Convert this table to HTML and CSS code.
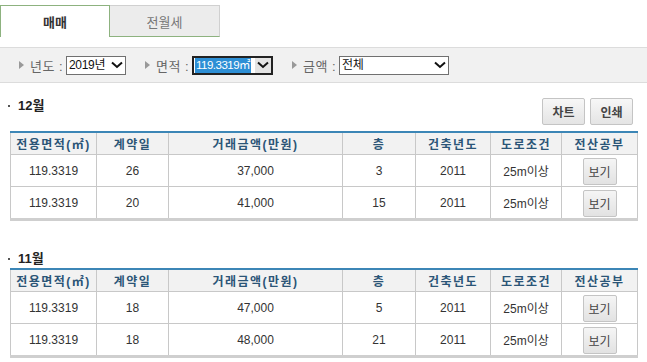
FILE: index.html
```html
<!DOCTYPE html>
<html lang="ko">
<head>
<meta charset="utf-8">
<link rel="stylesheet" href="styles.css">
</head>
<body>
<div class="tabs">
  <div class="tab active">매매</div>
  <div class="tab">전월세</div>
</div>

<div class="filter">
  <div class="fitem">
    <span class="tri"></span><span class="flabel">년도 :</span>
    <div class="sel sel-year"><span class="sval">2019년</span><span class="arrow"><svg width="12" height="8" viewBox="0 0 12 8"><path d="M1 1.5 L6 6 L11 1.5" fill="none" stroke="#111" stroke-width="2"/></svg></span></div>
  </div>
  <div class="fitem">
    <span class="tri"></span><span class="flabel">면적 :</span>
    <div class="sel sel-area focus"><span class="sval hl">119.3319㎡</span><span class="arrow gray"><svg width="12" height="8" viewBox="0 0 12 8"><path d="M1 1.5 L6 6 L11 1.5" fill="none" stroke="#111" stroke-width="2"/></svg></span></div>
  </div>
  <div class="fitem">
    <span class="tri"></span><span class="flabel">금액 :</span>
    <div class="sel sel-price"><span class="sval">전체</span><span class="arrow"><svg width="12" height="8" viewBox="0 0 12 8"><path d="M1 1.5 L6 6 L11 1.5" fill="none" stroke="#111" stroke-width="2"/></svg></span></div>
  </div>
</div>

<div class="section first">
  <div class="shead">
    <h3 class="stitle">12월</h3>
    <div class="btns">
      <span class="btn">차트</span>
      <span class="btn">인쇄</span>
    </div>
  </div>
  <table class="grid">
    <colgroup><col class="c1"><col class="c2"><col class="c3"><col class="c4"><col class="c5"><col class="c6"><col class="c7"></colgroup>
    <thead>
      <tr><th>전용면적(㎡)</th><th>계약일</th><th>거래금액(만원)</th><th>층</th><th>건축년도</th><th>도로조건</th><th>전산공부</th></tr>
    </thead>
    <tbody>
      <tr><td>119.3319</td><td>26</td><td>37,000</td><td>3</td><td>2011</td><td>25m이상</td><td><span class="view">보기</span></td></tr>
      <tr><td>119.3319</td><td>20</td><td>41,000</td><td>15</td><td>2011</td><td>25m이상</td><td><span class="view">보기</span></td></tr>
    </tbody>
  </table>
</div>

<div class="section second">
  <div class="shead">
    <h3 class="stitle">11월</h3>
  </div>
  <table class="grid">
    <colgroup><col class="c1"><col class="c2"><col class="c3"><col class="c4"><col class="c5"><col class="c6"><col class="c7"></colgroup>
    <thead>
      <tr><th>전용면적(㎡)</th><th>계약일</th><th>거래금액(만원)</th><th>층</th><th>건축년도</th><th>도로조건</th><th>전산공부</th></tr>
    </thead>
    <tbody>
      <tr><td>119.3319</td><td>18</td><td>47,000</td><td>5</td><td>2011</td><td>25m이상</td><td><span class="view">보기</span></td></tr>
      <tr><td>119.3319</td><td>18</td><td>48,000</td><td>21</td><td>2011</td><td>25m이상</td><td><span class="view">보기</span></td></tr>
    </tbody>
  </table>
</div>
</body>
</html>
```

FILE: styles.css
```css
html, body {
  margin: 0;
  padding: 0;
  background: #fff;
  overflow: hidden;
}
body {
  font-family: "Liberation Sans", "Noto Sans CJK KR", sans-serif;
  font-size: 12px;
  color: #333;
  width: 647px;
  height: 362px;
}

.tabs {
  display: flex;
  padding-top: 5px;
}
.tab {
  box-sizing: border-box;
  width: 110px;
  height: 32px;
  display: flex;
  align-items: center;
  justify-content: center;
  font-size: 13px;
  color: #777;
  background: #ececec;
  border: 1px solid #d0d0d0;
  border-bottom: 1px solid #8db27f;
  border-left: none;
}
.tab.active {
  background: #fff;
  color: #333;
  font-weight: bold;
  border: 1px solid #8db27f;
  border-bottom: none;
}

.filter {
  margin-top: 10px;
  box-sizing: border-box;
  height: 36px;
  background: #f1f1f1;
  border-top: 1px solid #dcdcdc;
  border-bottom: 1px solid #dcdcdc;
  display: flex;
  align-items: center;
  padding-left: 19px;
  gap: 19px;
}
.fitem {
  display: flex;
  align-items: center;
}
.tri {
  width: 0;
  height: 0;
  border-top: 4px solid transparent;
  border-bottom: 4px solid transparent;
  border-left: 5px solid #999;
  margin-right: 6px;
  flex: none;
}
.flabel {
  width: 32px;
  margin-right: 4px;
  font-size: 13px;
  color: #666;
  letter-spacing: 0.5px;
  white-space: nowrap;
  overflow: hidden;
}
.sel {
  box-sizing: border-box;
  height: 19px;
  border: 1px solid #707070;
  background: #fff;
  display: flex;
  align-items: center;
  justify-content: space-between;
  color: #111;
  font-size: 12px;
  overflow: hidden;
}
.sel-year { width: 60px; }
.sel-area { width: 81px; }
.sel-price { width: 110px; }
.sel.focus {
  border: 2px solid #222;
  height: 19px;
}
.sval {
  padding-left: 2px;
  line-height: 15px;
  white-space: nowrap;
  letter-spacing: -0.3px;
}
.sval.hl {
  background: #2d8fd5;
  color: #fff;
  margin-left: 1px;
  padding: 0 1px 0 1px;
  height: 15px;
  font-size: 11.5px;
  letter-spacing: -0.5px;
  flex: none;
}
.arrow {
  display: flex;
  align-items: center;
  justify-content: center;
  width: 16px;
  flex: none;
  height: 100%;
}
.arrow.gray {
  background: #e3e3e3;
}

.section.first {
  margin-top: 15px;
}
.section.second {
  margin-top: 30px;
}
.shead {
  display: flex;
  justify-content: space-between;
  align-items: flex-start;
  padding-left: 8px;
  padding-right: 14px;
}
.stitle {
  margin: 0;
  font-size: 13px;
  font-weight: bold;
  color: #222;
  line-height: 16px;
  display: flex;
  align-items: center;
}
.stitle::before {
  content: "";
  width: 2px;
  height: 2px;
  background: #555;
  margin-right: 8px;
}
.btns {
  display: flex;
  gap: 5px;
}
.btn {
  box-sizing: border-box;
  width: 43px;
  height: 27px;
  display: flex;
  align-items: center;
  justify-content: center;
  border: 1px solid #c4c4c4;
  border-radius: 2px;
  background: linear-gradient(#f7f7f7, #e4e4e4);
  font-weight: bold;
  color: #444;
  font-size: 12px;
}
.first .shead {
  margin-bottom: 6px;
}
.second .shead {
  margin-bottom: 1px;
}

.grid {
  margin-left: 10px;
  width: 627px;
  table-layout: fixed;
  border-collapse: collapse;
  border-top: 2px solid #3c86b6;
  border-bottom: 3px solid #cfcfcf;
}
.c1 { width: 86px; }
.c2 { width: 72px; }
.c3 { width: 174px; }
.c4 { width: 73px; }
.c5 { width: 75px; }
.c6 { width: 71px; }
.c7 { width: 76px; }
.grid th {
  height: 21px;
  padding: 0;
  background: #f2f2f2;
  color: #2b5577;
  font-weight: bold;
  font-size: 12px;
  letter-spacing: 1.5px;
  border: 1px solid #c8c8c8;
  border-top: none;
}
.grid td {
  height: 31px;
  padding: 0;
  text-align: center;
  border: 1px solid #c8c8c8;
  color: #333;
  font-size: 12px;
}
.view {
  box-sizing: border-box;
  display: inline-flex;
  align-items: center;
  justify-content: center;
  width: 34px;
  height: 27px;
  margin-top: 2px;
  border: 1px solid #c4c4c4;
  border-radius: 2px;
  background: linear-gradient(#f5f5f5, #e2e2e2);
  color: #444;
  font-size: 12px;
  vertical-align: middle;
}
```
